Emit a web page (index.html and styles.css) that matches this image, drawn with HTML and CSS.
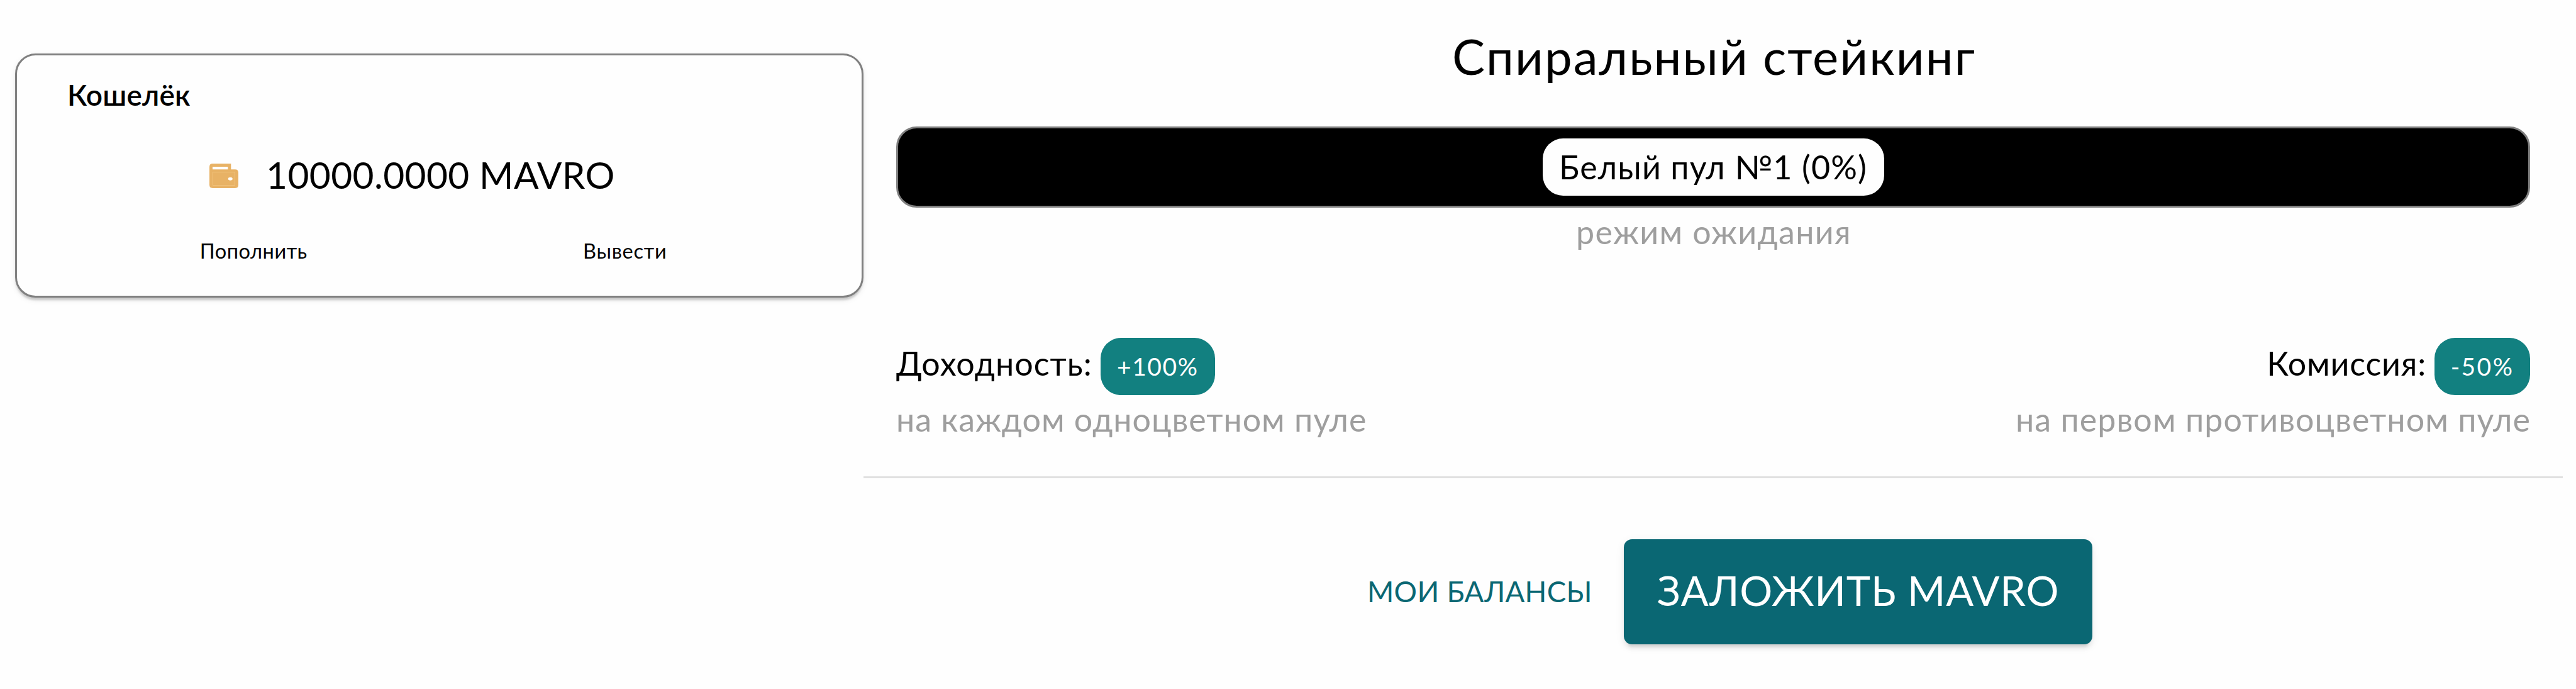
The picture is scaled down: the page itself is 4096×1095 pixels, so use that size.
FILE: index.html
```
<!DOCTYPE html>
<html lang="ru">
<head>
<meta charset="utf-8">
<title>Спиральный стейкинг</title>
<link rel="stylesheet" href="styles.css">
</head>
<body>
<div class="page">
  <aside class="side">
    <section class="wallet">
      <h2 class="wallet-title">Кошелёк</h2>
      <div class="balance">
        <svg class="wallet-icon" viewBox="0 0 224 188" preserveAspectRatio="none" aria-hidden="true">
          <path fill="#e8b265" fill-rule="evenodd" d="M25 0H167V45H199Q224 45 224 70V163Q224 188 199 188H25Q0 188 0 163V25Q0 0 25 0ZM24 24V45H143V24Z"/>
          <rect x="27" y="65" width="170" height="101" fill="none" stroke="#f3c682" stroke-width="4"/>
          <ellipse cx="162" cy="117" rx="17" ry="12" fill="#fff"/>
        </svg>
        <span class="amount">10000.0000 MAVRO</span>
      </div>
      <div class="wallet-actions">
        <a class="deposit">Пополнить</a>
        <a class="withdraw">Вывести</a>
      </div>
    </section>
  </aside>
  <main class="staking">
    <div class="content">
      <h1 class="title">Спиральный стейкинг</h1>
      <div class="pool-bar"><span class="pool">Белый пул №1 (0%)</span></div>
      <p class="status">режим ожидания</p>
      <div class="terms">
        <div class="term">
          <div class="term-head"><span class="yield">Доходность:</span><span class="badge badge-yield">+100%</span></div>
          <p class="note note-yield">на каждом одноцветном пуле</p>
        </div>
        <div class="term term-end">
          <div class="term-head"><span class="fee">Комиссия:</span><span class="badge badge-fee">-50%</span></div>
          <p class="note note-fee">на первом противоцветном пуле</p>
        </div>
      </div>
    </div>
    <div class="divider"></div>
    <div class="actions">
      <a class="balances">МОИ БАЛАНСЫ</a>
      <button class="pledge" type="button">ЗАЛОЖИТЬ MAVRO</button>
    </div>
  </main>
</div>
</body>
</html>
```
FILE: styles.css
```
* {
  box-sizing: border-box;
  margin: 0;
}

body {
  background: #fefefe;
  color: #000;
  font-family: Lato, "Open Sans", sans-serif;
  font-size: 52px;
  line-height: 62px;
  font-weight: 400;
  white-space: nowrap;
}

.page {
  display: flex;
  height: 1095px;
  overflow: hidden;
}

.side {
  flex: 0 0 1373px;
  padding: 85px 0 0 24px;
}

.wallet {
  height: 388px;
  border: 3px solid #808080;
  border-radius: 32.5px;
  background: #fefefe;
  padding-top: 35px;
  box-shadow: 0 6.5px 3.3px -3.3px rgba(0, 0, 0, .1), 0 3.3px 3.3px rgba(0, 0, 0, .07), 0 3.3px 9.8px rgba(0, 0, 0, .08);
}

.wallet-title {
  padding-left: 80px;
  font-size: 46px;
  line-height: 56px;
  font-weight: 600;
  letter-spacing: .15px;
}

.balance {
  display: flex;
  align-items: center;
  gap: 44px;
  margin-top: 63px;
  padding-left: 306px;
  line-height: 70px;
}

.wallet-icon {
  width: 46px;
  height: 39px;
  margin-top: 5px;
}

.amount {
  font-size: 58.6px;
  letter-spacing: .4px;
}

.wallet-actions {
  display: grid;
  grid-template-columns: 1fr 1fr;
  margin-top: 67px;
  padding: 0 81px;
  font-size: 32.6px;
  line-height: 40px;
  text-align: center;
}

.deposit {
  letter-spacing: .5px;
}

.withdraw {
  letter-spacing: .73px;
}

.staking {
  flex: 0 0 2702px;
}

.content {
  padding: 41px 52px 0;
}

.title {
  font-size: 78px;
  line-height: 96px;
  font-weight: 400;
  letter-spacing: 2.06px;
  text-align: center;
  padding-left: 3px;
}

.pool-bar {
  display: flex;
  align-items: center;
  justify-content: center;
  height: 129px;
  margin-top: 64px;
  border: 3px solid #808080;
  border-radius: 32.5px;
  background: #000;
}

.pool {
  width: 543px;
  border-radius: 32.5px;
  background: #fefefe;
  line-height: 91px;
  letter-spacing: 1.09px;
  text-align: center;
}

.status {
  margin-top: 7px;
  padding-left: 2px;
  color: #9e9e9e;
  letter-spacing: 1.32px;
  text-align: center;
}

.terms {
  display: flex;
  justify-content: space-between;
  margin-top: 138px;
}

.term-head {
  display: flex;
  align-items: baseline;
  gap: 13px;
}

.term-end .term-head {
  justify-content: flex-end;
}

.yield {
  letter-spacing: 1px;
}

.fee {
  letter-spacing: .79px;
}

.badge {
  border-radius: 32.5px;
  background: #128080;
  color: #fff;
  font-size: 39px;
  line-height: 91px;
  text-align: center;
}

.badge-yield {
  width: 182px;
  letter-spacing: 1.6px;
}

.badge-fee {
  width: 152px;
  letter-spacing: 2.4px;
}

.note {
  margin-top: 7px;
  color: #9e9e9e;
}

.note-yield {
  letter-spacing: .95px;
}

.note-fee {
  margin-right: -1px;
  letter-spacing: 1.04px;
}

.divider {
  height: 3px;
  margin-top: 60px;
  background: #e0e0e0;
}

.actions {
  display: flex;
  align-items: center;
  margin-top: 97px;
  padding-left: 801px;
}

.balances {
  width: 408px;
  padding-bottom: 2px;
  color: #0a6773;
  font-size: 45.6px;
  letter-spacing: .28px;
}

.pledge {
  width: 745px;
  height: 167px;
  padding: 0 0 5px;
  border: 0;
  border-radius: 13px;
  background: #0a6773;
  color: #fff;
  font-family: inherit;
  font-size: 65px;
  letter-spacing: .85px;
  box-shadow: 0 9.8px 3.3px -6.5px rgba(0, 0, 0, .08), 0 6.5px 6.5px rgba(0, 0, 0, .06), 0 3.3px 16px rgba(0, 0, 0, .06);
}
```
